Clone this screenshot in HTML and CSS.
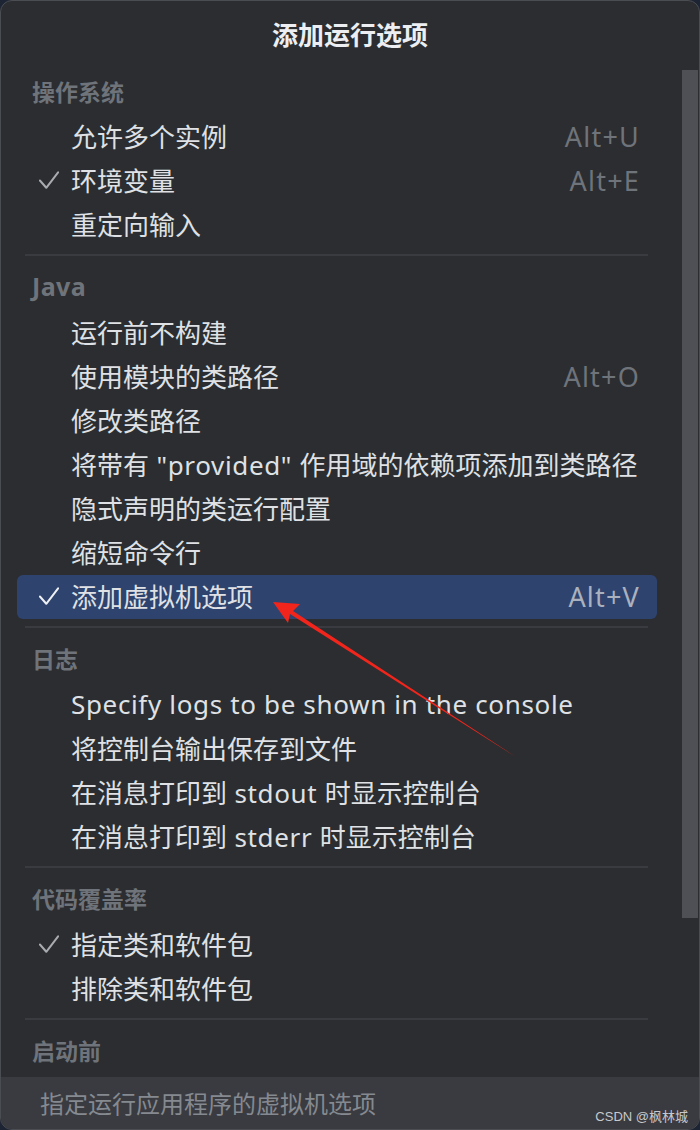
FILE: index.html
```html
<!DOCTYPE html>
<html lang="zh-CN">
<head>
<meta charset="utf-8">
<title>添加运行选项</title>
<link rel="stylesheet" href="styles.css">
</head>
<body>
<div class="panel">
  <div class="title">添加运行选项</div>
  <div class="body">
    <div class="list">
      <div class="section-head">操作系统</div>
      <div class="item"><span class="check"></span><span class="label">允许多个实例</span><span class="key">Alt+U</span></div>
      <div class="item"><span class="check"><svg viewBox="0 0 22 20"><path d="M1 10 L8 18 L21 1"/></svg></span><span class="label">环境变量</span><span class="key">Alt+E</span></div>
      <div class="item"><span class="check"></span><span class="label">重定向输入</span></div>
      <div class="sep"></div>
      <div class="section-head lat-head">Java</div>
      <div class="item"><span class="check"></span><span class="label">运行前不构建</span></div>
      <div class="item"><span class="check"></span><span class="label">使用模块的类路径</span><span class="key">Alt+O</span></div>
      <div class="item"><span class="check"></span><span class="label">修改类路径</span></div>
      <div class="item"><span class="check"></span><span class="label">将带有<span class="lat"> "provided" </span>作用域的依赖项添加到类路径</span></div>
      <div class="item"><span class="check"></span><span class="label">隐式声明的类运行配置</span></div>
      <div class="item"><span class="check"></span><span class="label">缩短命令行</span></div>
      <div class="item selected"><span class="check"><svg viewBox="0 0 22 20"><path d="M1 10 L8 18 L21 1"/></svg></span><span class="label">添加虚拟机选项</span><span class="key">Alt+V</span></div>
      <div class="sep"></div>
      <div class="section-head">日志</div>
      <div class="item"><span class="check"></span><span class="label lat">Specify logs to be shown in the console</span></div>
      <div class="item"><span class="check"></span><span class="label">将控制台输出保存到文件</span></div>
      <div class="item"><span class="check"></span><span class="label">在消息打印到<span class="lat"> stdout </span>时显示控制台</span></div>
      <div class="item"><span class="check"></span><span class="label">在消息打印到<span class="lat"> stderr </span>时显示控制台</span></div>
      <div class="sep"></div>
      <div class="section-head">代码覆盖率</div>
      <div class="item"><span class="check"><svg viewBox="0 0 22 20"><path d="M1 10 L8 18 L21 1"/></svg></span><span class="label">指定类和软件包</span></div>
      <div class="item"><span class="check"></span><span class="label">排除类和软件包</span></div>
      <div class="sep"></div>
      <div class="section-head">启动前</div>
    </div>
    <div class="scroll"><div class="thumb"></div></div>
  </div>
  <div class="footer">指定运行应用程序的虚拟机选项</div>
  <div class="watermark">CSDN @枫林城</div>
  <svg class="arrow" viewBox="0 0 700 1130" width="700" height="1130">
    <polygon points="273,602 300,604 293,611 516,757 290,614 288,623"/>
  </svg>
</div>
</body>
</html>
```

FILE: styles.css
```css
* { box-sizing: border-box; }
html, body {
  margin: 0;
  padding: 0;
  background: #1d2433;
}
body {
  width: 700px;
  height: 1130px;
  overflow: hidden;
  font-family: "Noto Sans", "Noto Sans CJK SC", sans-serif;
}
.panel {
  position: relative;
  width: 700px;
  height: 1130px;
  background: #2b2d30;
  border: 1px solid #4a4d52;
  border-radius: 12px;
  overflow: hidden;
  display: flex;
  flex-direction: column;
}
.title {
  height: 69px;
  flex: none;
  display: flex;
  align-items: center;
  justify-content: center;
  color: #eceef2;
  font-weight: 700;
  font-size: 26px;
  padding-bottom: 4px;
}
.body {
  flex: 1;
  display: flex;
  min-height: 0;
  overflow: hidden;
}
.list {
  flex: 1;
  padding: 0 25px 0 0;
  overflow: hidden;
}
.scroll {
  width: 17px;
  flex: none;
}
.thumb {
  width: 16px;
  height: 848px;
  background: #4e5055;
}
.section-head {
  height: 44px;
  display: flex;
  align-items: center;
  padding-left: 31px;
  padding-bottom: 3px;
  margin-bottom: 2px;
  color: #6f737a;
  font-weight: 700;
  font-size: 23px;
}
.section-head.lat-head { font-size: 25px; letter-spacing: 0.4px; }
.list > .section-head:first-child { margin-bottom: 1px; }
.item {
  height: 44px;
  margin-left: 16px;
  display: flex;
  align-items: center;
  padding: 0 17px 2px 0;
  color: #dfe1e5;
  font-size: 26px;
  border-radius: 6px;
  white-space: nowrap;
}
.item .check {
  width: 54px;
  flex: none;
  display: flex;
  align-items: center;
  padding-left: 22px;
}
.check svg {
  width: 20px;
  height: 19px;
  fill: none;
  stroke: #a8abb0;
  stroke-width: 2.2;
  stroke-linecap: round;
  stroke-linejoin: round;
}
.item .label { flex: 1; }
.lat { letter-spacing: 0.65px; }
.item .key {
  color: #6f737a;
  font-size: 27px;
  letter-spacing: 1.2px;
}
.item.selected {
  background: #2e436e;
}
.item.selected .check svg { stroke: #eef0f4; }
.item.selected .key { color: #aab1be; }
.sep {
  height: 2px;
  margin: 7px 9px 9px 24px;
  background: #393b40;
}
.footer {
  flex: none;
  height: 52px;
  background: #393b40;
  color: #858990;
  font-size: 24px;
  display: flex;
  align-items: center;
  padding: 0 0 2px 39px;
}
.watermark {
  position: absolute;
  right: 11px;
  bottom: 4px;
  color: #c8c9cc;
  font-size: 13px;
  font-family: "Liberation Sans", "Noto Sans CJK SC", sans-serif;
}
.arrow {
  position: absolute;
  left: -1px;
  top: -1px;
  pointer-events: none;
}
.arrow polygon { fill: #f2251c; }
```
